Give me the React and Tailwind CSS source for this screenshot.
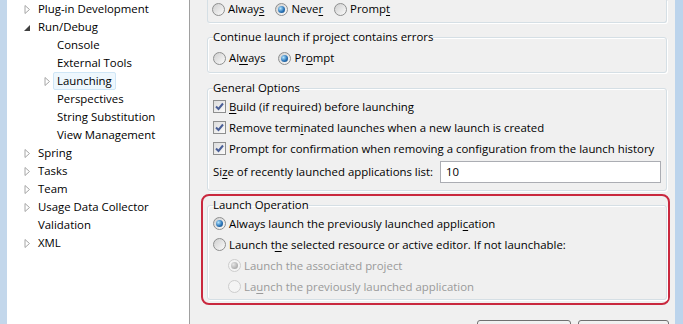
import React from "react";

const tree = [
  { label: "Plug-in Development", level: 0, arrow: "closed" },
  { label: "Run/Debug", level: 0, arrow: "open" },
  { label: "Console", level: 1 },
  { label: "External Tools", level: 1 },
  { label: "Launching", level: 1, arrow: "closed", selected: true },
  { label: "Perspectives", level: 1 },
  { label: "String Substitution", level: 1 },
  { label: "View Management", level: 1 },
  { label: "Spring", level: 0, arrow: "closed" },
  { label: "Tasks", level: 0, arrow: "closed" },
  { label: "Team", level: 0, arrow: "closed" },
  { label: "Usage Data Collector", level: 0, arrow: "closed" },
  { label: "Validation", level: 0 },
  { label: "XML", level: 0, arrow: "closed" },
];

function Arrow({ kind }) {
  if (kind === "open") {
    return (
      <svg width="7" height="9" viewBox="0 0 7 9">
        <polygon points="6,2 6,8 0,8" fill="#404040" />
      </svg>
    );
  }
  if (kind === "closed") {
    return (
      <svg width="7" height="9" viewBox="0 0 7 9">
        <polygon points="1,0.5 5.5,4.5 1,8.5" fill="none" stroke="#a6a6a6" />
      </svg>
    );
  }
  return null;
}

function TreeRow({ item }) {
  return (
    <div className={`flex h-[18px] items-center ${item.level === 0 ? "pl-[17px]" : "pl-[37px]"}`}>
      <span className={`flex items-center ${item.level === 0 ? "w-[10px]" : "w-[9px]"}`}>
        <Arrow kind={item.arrow} />
      </span>
      <span
        className={`flex h-[18px] items-center rounded-[2px] border px-[3px] ${
          item.selected ? "border-[#cfe6f6] bg-[#eef7fd]" : "border-transparent"
        }`}
      >
        {item.label}
      </span>
    </div>
  );
}

function Radio({ checked, disabled }) {
  return (
    <span
      className={`flex h-[13px] w-[13px] shrink-0 items-center justify-center rounded-full border ${
        disabled
          ? "border-[#cdcdcd] bg-[#f4f4f4]"
          : "border-[#8e8f8f] bg-[linear-gradient(135deg,#cfcfcf,#fbfbfb)]"
      }`}
    >
      {checked && (
        <span
          className={`h-[7px] w-[7px] rounded-full ${
            disabled
              ? "bg-[radial-gradient(circle_at_35%_35%,#e6e6e6,#adadad_70%)]"
              : "bg-[radial-gradient(circle_at_35%_35%,#b4e6ff,#2a74b8_55%,#0e3f73)]"
          }`}
        />
      )}
    </span>
  );
}

function Check() {
  return (
    <span className="flex h-[13px] w-[13px] shrink-0 items-center justify-center border border-[#8e8f8f] bg-[linear-gradient(135deg,#dcdcdc,#fbfbfb)]">
      <svg width="11" height="11" viewBox="0 0 11 11">
        <path d="M2 5.5 L4.5 8 L9 2.5" fill="none" stroke="#4a5f97" strokeWidth="2" />
      </svg>
    </span>
  );
}

function Opt({ children, control, disabled, className = "" }) {
  return (
    <div className={`flex h-[21px] items-center gap-[3px] ${disabled ? "text-[#9a9a9a]" : ""} ${className}`}>
      {control}
      <span>{children}</span>
    </div>
  );
}

function Group({ title, children, className = "" }) {
  return (
    <fieldset
      className={`rounded-[3px] border border-[#d5dfe5] pl-[5px] pr-[5px] shadow-[1px_1px_0_#fff,inset_1px_1px_0_#fff] ${className}`}
    >
      <legend className="h-[16px] leading-[16px]">{title}</legend>
      {children}
    </fieldset>
  );
}

const U = ({ children }) => <u className="underline-offset-[2px]">{children}</u>;

export default function App() {
  return (
    <div className="flex h-[324px] w-[683px] overflow-hidden bg-[#f0f0f0] font-['Open_Sans',sans-serif] text-[11.4px] text-black">
      <div className="w-[7px] shrink-0 bg-[#c3d7eb]" />

      <div className="w-[183px] shrink-0 border-r border-[#a0a0a0] bg-white">
        {tree.map((item) => (
          <TreeRow key={item.label} item={item} />
        ))}
      </div>

      <div className="flex flex-1 flex-col pl-[17px] pr-[8px]">
        <div className="rounded-b-[3px] border-x border-b border-[#d5dfe5] pb-[4px] pl-[4px] shadow-[1px_1px_0_#fff]">
          <div className="flex h-[18px] items-center">
            <Opt control={<Radio />}>
              Alway<U>s</U>
            </Opt>
            <Opt control={<Radio checked />} className="ml-[11px]">
              Neve<U>r</U>
            </Opt>
            <Opt control={<Radio />} className="ml-[11px]">
              Promp<U>t</U>
            </Opt>
          </div>
        </div>

        <Group title="Continue launch if project contains errors" className="mt-[6px] pb-[5px]">
          <div className="mt-[4px] flex h-[18px] items-center">
            <Opt control={<Radio />}>
              Al<U>w</U>ays
            </Opt>
            <Opt control={<Radio checked />} className="ml-[13px]">
              Pr<U>o</U>mpt
            </Opt>
          </div>
        </Group>

        <Group title="General Options" className="mt-[7px] pb-[5px]">
          <Opt control={<Check />}>
            <U>B</U>uild (if required) before launching
          </Opt>
          <Opt control={<Check />}>
            Remove term<U>i</U>nated launches when a new launch is created
          </Opt>
          <Opt control={<Check />}>
            Prompt for confirmation when removing a configuration from the launch history
          </Opt>
          <div className="flex items-center py-[2px]">
            <span>
              Si<U>z</U>e of recently launched applications list:
            </span>
            <div className="ml-auto flex h-[22px] w-[221px] items-center border border-[#abadb3] bg-white pl-[5px]">
              10
            </div>
          </div>
        </Group>

        <div className="mr-[-3px] ml-[-6px] mt-[3px] rounded-[8px] border-2 border-[#c9283e] pb-[3px] pl-[4px] pr-[1px] pt-[1px]">
          <Group title="Launch Operation" className="pb-[2px]">
            <Opt control={<Radio checked />}>
              Always launch the previously launched appli<U>c</U>ation
            </Opt>
            <Opt control={<Radio />}>
              Launch t<U>h</U>e selected resource or active editor. If not launchable:
            </Opt>
            <Opt control={<Radio checked disabled />} disabled className="pl-[15px]">
              Launch the associated project
            </Opt>
            <Opt control={<Radio disabled />} disabled className="pl-[15px]">
              La<U>u</U>nch the previously launched application
            </Opt>
          </Group>
        </div>

        <div className="mr-[-2px] mt-[15px] flex justify-end gap-[7px]">
          <div className="h-[23px] w-[94px] shrink-0 rounded-[3px] border border-[#707070] bg-[linear-gradient(#f2f2f2,#dedede)]" />
          <div className="h-[23px] w-[91px] shrink-0 rounded-[3px] border border-[#707070] bg-[linear-gradient(#f2f2f2,#dedede)]" />
        </div>
      </div>

      <div className="w-[8px] shrink-0 bg-[#bcd4ec]" />
    </div>
  );
}
